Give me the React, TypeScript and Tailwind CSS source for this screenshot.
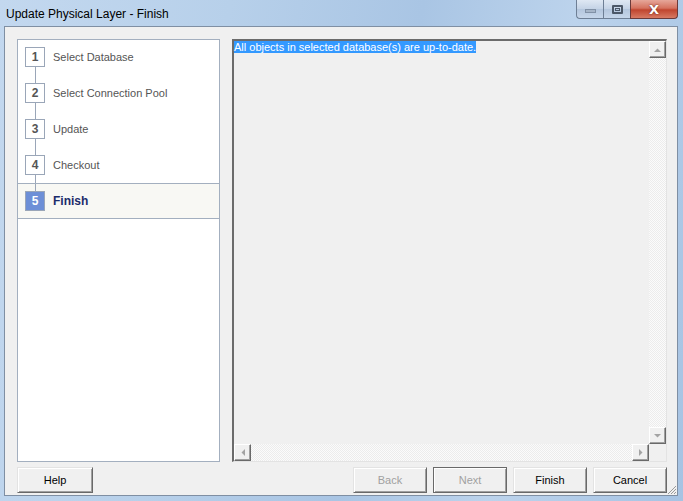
import React from 'react';

const steps = ['Select Database', 'Select Connection Pool', 'Update', 'Checkout', 'Finish'];

const font = { fontFamily: '"Liberation Sans", Arial, sans-serif' };

const Arrow: React.FC<{ dir: 'up' | 'down' | 'left' | 'right' }> = ({ dir }) => {
  const pts = {
    up: '0,4 7,4 3.5,0.5',
    down: '0,0 7,0 3.5,3.5',
    left: '4,0 4,7 0.5,3.5',
    right: '0,0 0,7 3.5,3.5',
  }[dir];
  const vertical = dir === 'up' || dir === 'down';
  return (
    <svg width={vertical ? 7 : 4} height={vertical ? 4 : 7} viewBox={vertical ? '0 0 7 4' : '0 0 4 7'}>
      <polygon points={pts} fill="#a3a3a3" />
    </svg>
  );
};

const ScrollButton: React.FC<{ dir: 'up' | 'down' | 'left' | 'right' }> = ({ dir }) => (
  <div className="w-[17px] h-[17px] shrink-0 bg-[#f0f0f0] border-t border-l border-white border-r border-b border-r-[#696969] border-b-[#696969] flex items-center justify-center shadow-[inset_-1px_-1px_0_#a0a0a0]">
    <Arrow dir={dir} />
  </div>
);

const track = 'bg-[repeating-conic-gradient(#ececec_0%_25%,#fbfbfb_0%_50%)] bg-[length:2px_2px]';

const WinButton: React.FC<{ label: string; disabled?: boolean; focused?: boolean; wide?: boolean }> = ({
  label,
  disabled,
  focused,
  wide,
}) => (
  <div
    className={`${wide ? 'w-[76px]' : 'w-[74px]'} h-[26px] flex items-center justify-center text-[11px] bg-[#f0f0f0] border ${
      focused
        ? 'border-[#696969] shadow-[inset_1px_1px_0_#fff,inset_-1px_-1px_0_#a0a0a0]'
        : 'border-t-[#e3e3e3] border-l-[#e3e3e3] border-r-[#696969] border-b-[#696969] shadow-[inset_1px_1px_0_#fff,inset_-1px_-1px_0_#a0a0a0]'
    } ${disabled ? 'text-[#a0a0a0]' : 'text-black'}`}
  >
    {label}
  </div>
);

export default function App() {
  return (
    <div
      className="w-[683px] h-[501px] flex flex-col overflow-hidden bg-[linear-gradient(100deg,#c3d8ef_0%,#b7d0ea_30%,#a9c5e4_55%,#bcd3ec_75%,#a6c3e3_100%)]"
      style={font}
    >
      {/* title bar */}
      <div className="h-[26px] shrink-0 flex items-start justify-between">
        <div className="pl-[6px] pt-[5px] text-[12px] text-black">Update Physical Layer - Finish</div>
        <div className="flex mr-[5px]">
          <div className="w-[27px] h-[19px] rounded-bl-[4px] border border-r-0 border-t-0 border-[#6e7f95] bg-[linear-gradient(#dfe8f3,#c4d3e6_50%,#b4c6dd_51%,#c6d6ea)] flex items-center justify-center">
            <div className="w-[11px] h-[4px] bg-[#a6b5c8] border border-[#8191a6] mt-[4px]" />
          </div>
          <div className="w-[27px] h-[19px] border-b border-l border-[#6e7f95] bg-[linear-gradient(#dfe8f3,#c4d3e6_50%,#b4c6dd_51%,#c6d6ea)] flex items-center justify-center">
            <div className="w-[11px] h-[9px] border-2 border-[#4c5868] rounded-[1px] flex items-center justify-center">
              <div className="w-[5px] h-[3px] border border-[#4c5868]" />
            </div>
          </div>
          <div className="w-[48px] h-[19px] rounded-br-[4px] border border-t-0 border-[#6b3a3a] bg-[linear-gradient(#e6a79a,#d5725f_45%,#c0452f_55%,#d87a63)] flex items-center justify-center">
            <span className="text-white font-bold text-[13px] leading-none" style={{ fontFamily: '"DejaVu Sans", sans-serif', textShadow: '0 0 2px #5a1a10' }}>
              X
            </span>
          </div>
        </div>
      </div>

      {/* client */}
      <div className="relative ml-[4px] mr-[5px] mb-[5px] flex-1 border border-[#7f8fa3] bg-[#f0f0f0] pt-[12px] pl-[12px] pr-[10px] flex flex-col">
        <div className="flex gap-[12px] h-[423px]">
          {/* steps panel */}
          <div className="w-[203px] bg-white border border-[#a3afbf] flex flex-col">
            {steps.map((s, i) => {
              const active = i === 4;
              return (
                <div
                  key={s}
                  className={`h-[36px] flex items-stretch pl-[7px] ${
                    active ? 'border-y border-[#a3afbf] bg-[#f8f8f4]' : i === 0 ? '-mt-px' : ''
                  }`}
                >
                  <div className="w-[20px] flex flex-col items-center">
                    <div className={`flex-1 w-px ${i === 0 ? '' : 'bg-[#9aa6b8]'}`} />
                    <div
                      className={`w-[20px] h-[20px] shrink-0 flex items-center justify-center text-[12px] font-bold border ${
                        active ? 'bg-[#6d8fd7] border-[#9aa6b8] text-white' : 'bg-white border-[#9aa6b8] text-[#555]'
                      }`}
                    >
                      {i + 1}
                    </div>
                    <div className={`flex-1 w-px ${active ? '' : 'bg-[#9aa6b8]'}`} />
                  </div>
                  <div
                    className={`flex items-center ml-[8px] text-[11px] ${
                      active ? 'font-bold text-[#1b2c6b] text-[12px]' : 'text-[#555]'
                    }`}
                  >
                    {s}
                  </div>
                </div>
              );
            })}
          </div>

          {/* message area */}
          <div className="flex-1 flex border-t-2 border-l-2 border-[#6b6b6b] border-r border-b border-r-[#e3e3e3] border-b-[#e3e3e3]">
            <div className="flex-1 flex flex-col">
              <div className="flex-1 flex">
                <div className="flex-1 bg-[#f0f0f0] text-[11px] leading-[13px]">
                  <span className="bg-[#3399ff] text-white">All objects in selected database(s) are up-to-date.</span>
                </div>
                <div className="w-[17px] flex flex-col">
                  <ScrollButton dir="up" />
                  <div className={`flex-1 ${track}`} />
                  <ScrollButton dir="down" />
                </div>
              </div>
              <div className="h-[17px] flex">
                <ScrollButton dir="left" />
                <div className={`flex-1 ${track}`} />
                <ScrollButton dir="right" />
                <div className="w-[17px] bg-[#f0f0f0]" />
              </div>
            </div>
          </div>
        </div>

        {/* buttons */}
        <div className="flex mt-[5px] h-[26px]">
          <WinButton label="Help" wide />
          <div className="flex-1" />
          <div className="flex gap-[6px]">
            <WinButton label="Back" disabled />
            <WinButton label="Next" disabled focused />
            <WinButton label="Finish" />
            <WinButton label="Cancel" />
          </div>
        </div>

        {/* size grip */}
        <svg className="absolute right-0 bottom-0" width="11" height="11" viewBox="0 0 11 11">
          <path d="M10 2 L2 10 M10 5 L5 10 M10 8 L8 10" stroke="#9a9a9a" strokeWidth="1" />
        </svg>
      </div>
    </div>
  );
}
